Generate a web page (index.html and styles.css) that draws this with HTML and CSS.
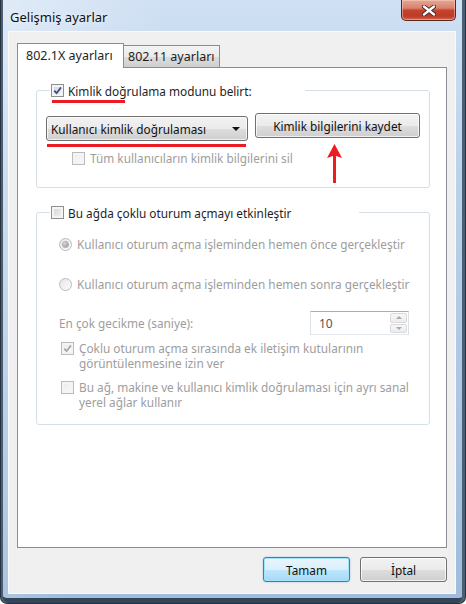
FILE: index.html
```html
<!DOCTYPE html>
<html lang="tr">
<head>
  <meta charset="UTF-8">
  <title>Gelişmiş ayarlar</title>
  <link rel="stylesheet" href="styles.css">
</head>
<body>
  <div class="window">
    <!-- Title bar -->
    <div class="titlebar">
      <span class="title">Gelişmiş ayarlar</span>
      <button class="close" type="button" aria-label="Kapat">
        <svg width="14" height="11" viewBox="0 0 14 11">
          <path d="M2 1.5 L12 9.5 M12 1.5 L2 9.5" stroke="#3a2a2a" stroke-width="4.2" stroke-linecap="round"/>
          <path d="M2 1.5 L12 9.5 M12 1.5 L2 9.5" stroke="#fff" stroke-width="2.4" stroke-linecap="round"/>
        </svg>
      </button>
    </div>

    <div class="client">
      <!-- Tabs -->
      <div class="tabs">
        <div class="tab active">802.1X ayarları</div>
        <div class="tab">802.11 ayarları</div>
      </div>

      <div class="tab-panel">
        <!-- Authentication mode group -->
        <div class="group group-auth">
          <div class="legend legend-auth">
            <span class="box"><svg viewBox="0 0 11 11"><path d="M2.2 5.6 L4.6 8.2 L9 2.4" class="tick"/></svg></span>
            <span>Kimlik doğrulama modunu belirt:</span>
          </div>
          <div class="row-mode">
            <div class="combo">
              <span>Kullanıcı kimlik doğrulaması</span>
              <span class="combo-arrow"></span>
            </div>
            <button class="btn btn-save" type="button">Kimlik bilgilerini kaydet</button>
          </div>
          <div class="check disabled row-delete">
            <span class="box"></span>
            <span>Tüm kullanıcıların kimlik bilgilerini sil</span>
          </div>
        </div>

        <!-- Single sign on group -->
        <div class="group group-sso">
          <div class="legend legend-sso">
            <span class="box"></span>
            <span>Bu ağda çoklu oturum açmayı etkinleştir</span>
          </div>
          <div class="radio disabled row-before">
            <span class="dot checked"></span>
            <span>Kullanıcı oturum açma işleminden hemen önce gerçekleştir</span>
          </div>
          <div class="radio disabled row-after">
            <span class="dot"></span>
            <span>Kullanıcı oturum açma işleminden hemen sonra gerçekleştir</span>
          </div>
          <div class="row-delay disabled">
            <span>En çok gecikme (saniye):</span>
            <div class="spin">
              <span class="spin-value">10</span>
              <span class="spin-btns">
                <span class="spin-up"></span>
                <span class="spin-down"></span>
              </span>
            </div>
          </div>
          <div class="check disabled row-dialogs">
            <span class="box"><svg viewBox="0 0 11 11"><path d="M2.2 5.6 L4.6 8.2 L9 2.4" class="tick"/></svg></span>
            <span>Çoklu oturum açma sırasında ek iletişim kutularının<br>görüntülenmesine izin ver</span>
          </div>
          <div class="check disabled row-vlan">
            <span class="box"></span>
            <span>Bu ağ, makine ve kullanıcı kimlik doğrulaması için ayrı sanal<br>yerel ağlar kullanır</span>
          </div>
        </div>

        <!-- red annotation marks -->
        <span class="mark mark-legend"></span>
        <span class="mark mark-combo"></span>
        <svg class="mark-arrow" width="17" height="41" viewBox="0 0 17 41">
          <path d="M8.5 1 L16 15 L10 13 L10 40 L7 40 L7 13 L1 15 Z" fill="#ec1c24"/>
        </svg>
      </div>

      <!-- Dialog buttons -->
      <div class="footer">
        <button class="btn btn-default" type="button">Tamam</button>
        <button class="btn" type="button">İptal</button>
      </div>
    </div>
  </div>
</body>
</html>
```

FILE: styles.css
```css
body {
  margin: 0;
  font-family: "Noto Sans", "Open Sans", sans-serif;
  font-size: 11.8px;
  color: #1e1e1e;
}
.window {
  width: 466px;
  height: 604px;
  box-sizing: border-box;
  display: flex;
  flex-direction: column;
  padding: 0 10px 10px 8px;
  border: 1px solid #26323f;
  border-top: none;
  border-radius: 0 0 7px 7px;
  background: linear-gradient(100deg, rgba(255,255,255,0.35) 0%, rgba(255,255,255,0) 30%),
              linear-gradient(#cfe0f3, #bad1eb 30%, #9fbcdc 100%);
  box-shadow: inset 2px 0 #4a5e74, inset -3px 0 #4a5e74, inset 0 -5px #34455a;
}
.titlebar {
  height: 32px;
  display: flex;
  justify-content: space-between;
  align-items: flex-start;
}
.title {
  margin: 8px 0 0 1px;
  font-size: 13px;
  color: #111;
  text-shadow: 0 0 6px rgba(255,255,255,0.9);
}
.close {
  width: 55px;
  height: 21px;
  margin: 0 -1px 0 0;
  padding: 0;
  display: flex;
  align-items: center;
  justify-content: center;
  border: 1px solid #5a2620;
  border-top: none;
  border-radius: 0 0 5px 5px;
  background: linear-gradient(#e7a694 0%, #d9836d 40%, #c4432f 52%, #bd3a26 80%, #d0664c 100%);
  box-shadow: inset 0 0 0 1px rgba(255,220,210,0.45);
}
.client {
  flex: 1;
  display: flex;
  flex-direction: column;
  padding: 11px 8px 11px 8px;
  background: #f0f0f0;
  box-shadow: 0 0 0 1px #f7f9fb;
}
.tabs {
  height: 24px;
  display: flex;
  align-items: flex-end;
}
.tab {
  box-sizing: border-box;
  height: 22px;
  padding: 2px 0 0 4px;
  width: 97px;
  margin-left: -1px;
  border: 1px solid #898c95;
  border-bottom: none;
  background: linear-gradient(#f3f3f3, #ebebeb 50%, #dddddd 51%, #cfcfcf);
  font-size: 12.5px;
}
.tab.active {
  position: relative;
  z-index: 1;
  margin: 0 0 -1px 0;
  width: 107px;
  height: 25px;
  padding: 3px 0 0 8px;
  background: #fff;
}
.tab-panel {
  position: relative;
  box-sizing: border-box;
  height: 481px;
  border: 1px solid #898c95;
  background: #fff;
  padding-top: 22px;
}
.group {
  box-sizing: border-box;
  margin: 0 16px 0 18px;
  border: 1px solid #d5dfe5;
  border-radius: 3px;
}
.group-auth {
  height: 98px;
}
.group-sso {
  margin-top: 24px;
  height: 213px;
}
.legend {
  display: flex;
  align-items: center;
  gap: 4px;
  height: 15px;
  margin: -8px 0 0 13px;
  padding-left: 1px;
  background: #fff;
}
.legend-auth {
  width: 254px;
}
.legend-sso {
  width: 308px;
}
.box {
  flex: none;
  box-sizing: border-box;
  width: 13px;
  height: 13px;
  border: 1px solid #8e8f8f;
  background: linear-gradient(135deg, #cdd1d7, #f7f7f7);
  box-shadow: inset 0 0 0 2px #f4f4f4;
}
.box svg {
  display: block;
  width: 11px;
  height: 11px;
}
.tick {
  fill: none;
  stroke: #3d4f8a;
  stroke-width: 1.8;
}
.check, .radio {
  display: flex;
  align-items: flex-start;
  gap: 5px;
  line-height: 15px;
}
.check .box, .radio .dot {
  margin-top: 1px;
}
.disabled {
  color: #9d9d9d;
}
.disabled .box {
  border-color: #bcbcbc;
  background: linear-gradient(135deg, #eaeaea, #fbfbfb);
}
.disabled .tick {
  stroke: #a8a8a8;
}
.row-mode {
  display: flex;
  align-items: flex-start;
  gap: 7px;
  margin: 15px 0 0 9px;
}
.combo {
  box-sizing: border-box;
  width: 202px;
  height: 25px;
  margin-top: 3px;
  padding: 0 7px 0 4px;
  display: flex;
  align-items: center;
  justify-content: space-between;
  border: 1px solid #707070;
  border-radius: 3px;
  background: linear-gradient(#f2f2f2, #ebebeb 50%, #dddddd 51%, #cfcfcf);
  box-shadow: inset 0 0 0 1px rgba(255,255,255,0.7);
  color: #111;
}
.combo-arrow {
  width: 0;
  height: 0;
  border-left: 4px solid transparent;
  border-right: 4px solid transparent;
  border-top: 4px solid #111;
}
.btn {
  box-sizing: border-box;
  height: 25px;
  padding: 0;
  border: 1px solid #707070;
  border-radius: 3px;
  background: linear-gradient(#f2f2f2, #ebebeb 50%, #dddddd 51%, #cfcfcf);
  box-shadow: inset 0 0 0 1px rgba(255,255,255,0.75);
  font-family: inherit;
  font-size: 11.8px;
  color: #111;
}
.btn-save {
  width: 165px;
}
.row-delete {
  margin: 10px 0 0 35px;
}
.row-before {
  margin: 17px 0 0 22px;
}
.row-after {
  margin: 25px 0 0 22px;
}
.dot {
  flex: none;
  box-sizing: border-box;
  width: 13px;
  height: 13px;
  border: 1px solid #bcbcbc;
  border-radius: 50%;
  background: linear-gradient(135deg, #e6e6e6, #fbfbfb);
  display: flex;
  align-items: center;
  justify-content: center;
}
.dot.checked::after {
  content: "";
  width: 5px;
  height: 5px;
  border-radius: 50%;
  background: radial-gradient(circle at 35% 35%, #d8d8d8, #8a8a8a);
  box-shadow: 0 0 0 1px #b5b5b5;
}
.row-delay {
  display: flex;
  align-items: center;
  justify-content: space-between;
  height: 24px;
  margin: 19px 20px 0 22px;
}
.spin {
  box-sizing: border-box;
  width: 99px;
  height: 24px;
  display: flex;
  align-items: center;
  justify-content: space-between;
  padding: 1px 1px 1px 8px;
  border: 1px solid #dbdfe6;
  border-top-color: #abadb3;
  border-bottom-color: #e3e9ef;
  background: #fff;
}
.spin-value {
  color: #555;
  font-size: 12px;
}
.spin-btns {
  width: 17px;
  height: 20px;
  display: flex;
  flex-direction: column;
  gap: 1px;
}
.spin-up, .spin-down {
  flex: 1;
  display: flex;
  align-items: center;
  justify-content: center;
  border: 1px solid #dadada;
  border-radius: 2px;
  background: linear-gradient(#f7f7f7, #ececec);
}
.spin-up::after, .spin-down::after {
  content: "";
  border-left: 3px solid transparent;
  border-right: 3px solid transparent;
}
.spin-up::after {
  border-bottom: 3px solid #a9a9a9;
}
.spin-down::after {
  border-top: 3px solid #a9a9a9;
}
.row-dialogs {
  margin: 6px 0 0 24px;
}
.row-vlan {
  margin: 9px 0 0 24px;
}
.footer {
  display: flex;
  justify-content: flex-end;
  gap: 10px;
  margin-top: 9px;
}
.footer .btn {
  width: 87px;
}
.btn-default {
  border-color: #3c7fb1;
  background: linear-gradient(#eaf6fd, #d9f0fc 50%, #bee6fd 51%, #a7d9f5);
  box-shadow: inset 0 0 0 1px #9fe4fb, 0 0 2px rgba(60,127,177,0.4);
}
.mark {
  position: absolute;
  height: 3px;
  background: #ec1c24;
}
.mark-legend {
  left: 34px;
  top: 32px;
  width: 73px;
}
.mark-combo {
  left: 29px;
  top: 76px;
  width: 199px;
}
.mark-arrow {
  position: absolute;
  left: 308px;
  top: 75px;
}
```
